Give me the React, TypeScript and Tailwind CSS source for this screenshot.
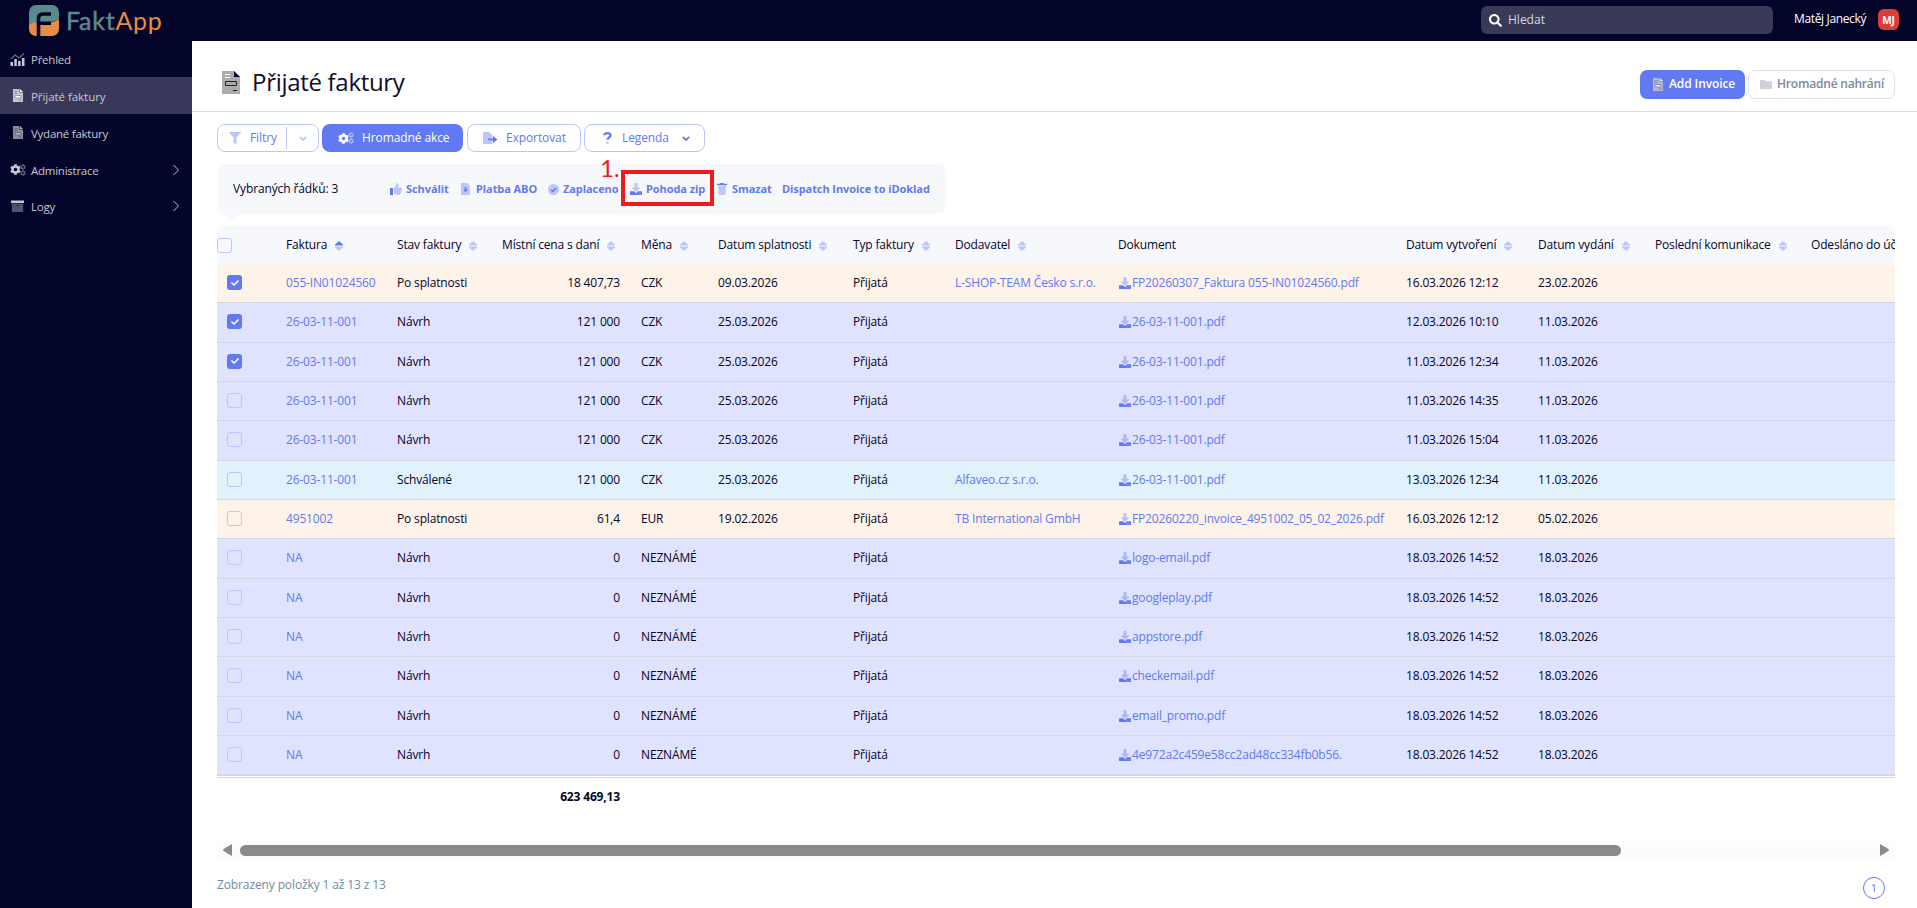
import type { ReactNode } from 'react';
import { FaCheck, FaCog, FaSearch } from 'react-icons/fa';

type Row = {
  invoice: string;
  status: string;
  price: string;
  currency: string;
  due: string;
  supplier: string;
  file: string;
  created: string;
  issued: string;
  checked?: boolean;
};

const draft = (created: string, checked = false): Row => ({
  invoice: '26-03-11-001',
  status: 'Návrh',
  price: '121 000',
  currency: 'CZK',
  due: '25.03.2026',
  supplier: '',
  file: '26-03-11-001.pdf',
  created,
  issued: '11.03.2026',
  checked,
});

const unknown = (file: string): Row => ({
  invoice: 'NA',
  status: 'Návrh',
  price: '0',
  currency: 'NEZNÁMÉ',
  due: '',
  supplier: '',
  file,
  created: '18.03.2026 14:52',
  issued: '18.03.2026',
});

const rows: Row[] = [
  {
    invoice: '055-IN01024560',
    status: 'Po splatnosti',
    price: '18 407,73',
    currency: 'CZK',
    due: '09.03.2026',
    supplier: 'L-SHOP-TEAM Česko s.r.o.',
    file: 'FP20260307_Faktura 055-IN01024560.pdf',
    created: '16.03.2026 12:12',
    issued: '23.02.2026',
    checked: true,
  },
  draft('12.03.2026 10:10', true),
  draft('11.03.2026 12:34', true),
  draft('11.03.2026 14:35'),
  draft('11.03.2026 15:04'),
  { ...draft('13.03.2026 12:34'), status: 'Schválené', supplier: 'Alfaveo.cz s.r.o.' },
  {
    invoice: '4951002',
    status: 'Po splatnosti',
    price: '61,4',
    currency: 'EUR',
    due: '19.02.2026',
    supplier: 'TB International GmbH',
    file: 'FP20260220_invoice_4951002_05_02_2026.pdf',
    created: '16.03.2026 12:12',
    issued: '05.02.2026',
  },
  unknown('logo-email.pdf'),
  unknown('googleplay.pdf'),
  unknown('appstore.pdf'),
  unknown('checkemail.pdf'),
  unknown('email_promo.pdf'),
  unknown('4e972a2c459e58cc2ad48cc334fb0b56.'),
];

const rowColors: Record<string, string> = {
  'Po splatnosti': 'bg-[#fef3e8]',
  Návrh: 'bg-[#e0e3fe]',
  Schválené: 'bg-[#e1f2fd]',
};

const columns =
  'grid grid-cols-[69px_111px_105px_139px_77px_135px_102px_163px_288px_132px_117px_156px_180px] items-center';

export default function App() {
  return (
    <div className="flex h-[908px] w-[1917px] flex-col overflow-hidden bg-white font-['Open_Sans',sans-serif] text-[12px] text-[#04042b]">
      <TopBar />
      <div className="flex min-h-0 flex-1">
        <Sidebar />
        <main className="min-w-0 flex-1">
          <PageHeader />
          <div className="pr-[22px] pl-[25px]">
            <Toolbar />
            <BulkActions />
            <InvoiceTable />
            <Scrollbar />
            <div className="flex justify-between pr-[10px]">
              <span className="mt-[17px] text-[12px] leading-[18px] tracking-[-0.12px] text-[#7189a0]">
                Zobrazeny položky 1 až 13 z 13
              </span>
              <span className="mt-[18px] flex size-[22px] items-center justify-center rounded-full border border-[#6179f2] text-[11px] text-[#6179f2]">
                1
              </span>
            </div>
          </div>
        </main>
      </div>
    </div>
  );
}

function TopBar() {
  return (
    <header className="flex h-[41px] shrink-0 items-start bg-[#03042a]">
      <div className="flex h-full w-[192px] items-center pl-[29px]">
        <svg width="30" height="31" viewBox="0 0 30 31">
          <path d="M7 0h16a7 7 0 0 1 7 7v7c-6 4-13 3-20 4-5 0-8 1-10 3V7a7 7 0 0 1 7-7z" fill="#5a8a89" />
          <path d="M0 20c4-4 9-2 15-2 6 0 11-1 15-4v10a7 7 0 0 1-7 7H7a7 7 0 0 1-7-7z" fill="#e88b45" />
          <path d="M9.500 31V13.500q0-4.500 4.500-4.500h8M9.500 18.300h12.500" fill="none" stroke="#04042a" strokeWidth="3.600" />
        </svg>
        <span className="ml-[7px] -mt-px font-['Lato',sans-serif] text-[25px] leading-[30px] tracking-[0.75px] text-[#5a8a89]">
          <span className="[-webkit-text-stroke:0.5px_#5a8a89]">Fakt</span>
          <span className="text-[#e88b45]">App</span>
        </span>
      </div>
      <div className="mt-[6px] ml-auto flex h-[28px] w-[292px] items-center rounded-[6px] bg-[#383a58] pl-[8px] text-[12px] text-[#d6d7e0]">
        <FaSearch size={13} color="#ffffff" />
        <span className="ml-[6px]">Hledat</span>
      </div>
      <span className="mt-[10px] ml-[21px] w-[73px] whitespace-nowrap text-[12px] leading-[18px] tracking-[-0.35px] text-white">
        Matěj Janecký
      </span>
      <span className="mt-[9px] mr-[18px] ml-[11px] flex size-[21px] items-center justify-center rounded-[6px] bg-[#e03b3b] pt-[2px] text-[10px] font-bold text-white">
        MJ
      </span>
    </header>
  );
}

function Sidebar() {
  return (
    <nav className="w-[192px] shrink-0 bg-[#03042a] text-[11.5px] tracking-[-0.25px] text-[#c6c7cf]">
      <NavItem icon={<ChartIcon />} label="Přehled" className="h-[36px]" />
      <NavItem
        icon={<FileInvoice className="h-[13px] w-[10px]" />}
        label="Přijaté faktury"
        className="h-[37px] bg-[#38395a] tracking-[-0.05px]"
      />
      <NavItem icon={<FileInvoice className="h-[13px] w-[10px] opacity-70" />} label="Vydané faktury" className="h-[37px]" />
      <NavItem icon={<Cogs />} label="Administrace" className="h-[37px]" chevron />
      <NavItem icon={<ArchiveIcon />} label="Logy" className="h-[36px]" chevron />
    </nav>
  );
}

function NavItem({ icon, label, className, chevron }: { icon: ReactNode; label: string; className: string; chevron?: boolean }) {
  return (
    <div className={`flex items-center pl-[10px] ${className}`}>
      <span className="flex w-[15px] justify-center">{icon}</span>
      <span className="mt-[2px] ml-[6px]">{label}</span>
      {chevron && (
        <svg className="mr-[13px] ml-auto h-[12px] w-[6px]" viewBox="0 0 6 12" fill="none" stroke="currentColor">
          <path d="M.5 1l5 5-5 5" />
        </svg>
      )}
    </div>
  );
}

function PageHeader() {
  return (
    <div className="flex h-[71px] items-start border-b border-[#d9dade] pr-[22px] pl-[30px]">
      <svg className="mt-[30px]" width="18" height="23" viewBox="0 0 18 23">
        <path d="M0 0h12l6 6v17H0z" fill="#aaadab" />
        <path d="M12 0l6 6h-6z" fill="#03042a" />
        <path d="M3 3.500h5M3 6.500h5" stroke="#fff" />
        <path d="M3.500 10.500h11v4h-11zM11 19.500h4" fill="none" stroke="#1c2038" />
      </svg>
      <h1 className="mt-[26px] ml-[12px] text-[24px] leading-[30px] tracking-[-0.3px] text-[#0d0d2c]">Přijaté faktury</h1>
      <button className="mt-[29px] ml-auto flex h-[29px] w-[105px] items-center rounded-[7px] bg-[#6179f2] pb-px pl-[13px] font-semibold tracking-[-0.1px] text-white">
        <FileInvoice className="mr-[6px] h-[13px] w-[10px] opacity-80" />
        Add Invoice
      </button>
      <button className="mt-[29px] ml-[3px] flex h-[29px] w-[147px] items-center rounded-[7px] border border-[#dfe1ef] pb-px pl-[11px] font-semibold tracking-[-0.2px] whitespace-nowrap text-[#7b8a9e]">
        <svg className="mr-[5px] h-[9px] w-[12px]" viewBox="0 0 12 9" fill="#cdd0d8">
          <path d="M1 0h3.500l1.200 1.200H11a1 1 0 0 1 1 1V8a1 1 0 0 1-1 1H1a1 1 0 0 1-1-1V1a1 1 0 0 1 1-1z" />
        </svg>
        Hromadné nahrání
      </button>
    </div>
  );
}

function Toolbar() {
  return (
    <div className="flex pt-[12px] text-[12px] tracking-[-0.1px] text-[#6179f2]">
      <div className="flex h-[28px] w-[102px] items-center rounded-[8px] border border-[#bcc6fd] pl-[11px]">
        <svg className="h-[12px] w-[12px]" viewBox="0 0 512 512" fill="#bcc6fd">
          <path d="M488 0H24C2.700 0-8.100 25.900 7.100 41L192 226v206c0 8 4 15 10 20l80 56c16 11 38 0 38-20V226L505 41c15-15 4-41-17-41z" />
        </svg>
        <span className="ml-[9px]">Filtry</span>
        <span className="ml-auto h-[22px] w-px bg-[#bcc6fd]" />
        <Chevron className="mr-[11px] ml-[12px] text-[#bcc6fd]" />
      </div>
      <div className="ml-[3px] flex h-[28px] w-[141px] items-center rounded-[8px] bg-[#6179f2] pl-[16px] text-white">
        <Cogs />
        <span className="ml-[8px] whitespace-nowrap">Hromadné akce</span>
      </div>
      <div className="ml-[4px] flex h-[28px] w-[114px] items-center rounded-[8px] border border-[#bcc6fd] pl-[15px]">
        <svg className="h-[12px] w-[15px]" viewBox="0 0 15 12">
          <path d="M1 0h5l3.500 3.500V11a1 1 0 0 1-1 1H1a1 1 0 0 1-1-1V1a1 1 0 0 1 1-1z" fill="#bcc6fd" />
          <path d="M5 6.500h5V4l4.500 3.500L10 11V8.300H5z" fill="#6179f2" />
        </svg>
        <span className="ml-[8px]">Exportovat</span>
      </div>
      <div className="ml-[3px] flex h-[28px] w-[121px] items-center rounded-[8px] border border-[#bcc6fd] pl-[18px]">
        <svg className="h-[12px] w-[9px]" viewBox="0 0 9 12">
          <path d="M1.200 3.200C2 .5 7.500.5 7.500 3.500c0 2-3 2-3 4.300" fill="none" stroke="#6179f2" strokeWidth="2.200" />
          <circle cx="4.500" cy="10.700" r="1.300" fill="#bcc6fd" />
        </svg>
        <span className="ml-[10px]">Legenda</span>
        <Chevron className="mr-[14px] ml-auto" />
      </div>
    </div>
  );
}

function BulkActions() {
  return (
    <div className="relative mt-[12px] flex h-[50px] w-[729px] items-center rounded-[8px] bg-[#f7f8fc] pl-[16px] whitespace-nowrap">
      <span className="w-[157px] text-[12px] tracking-[-0.12px]">Vybraných řádků: 3</span>
      <div className="flex items-center text-[11px] font-bold tracking-[-0.08px] text-[#6179f2]">
        <Action
          width="w-[71px]"
          label="Schválit"
          icon={
            <svg className="h-[12px] w-[12px]" viewBox="0 0 12 12">
              <path d="M0 5h3v7H0z" fill="#6179f2" />
              <path d="M4 5l2-2.500V.8C6 0 8.500-.3 8.500 2c0 1-.5 2-.8 2.500H11c1.300 0 1.200 1.700.6 2 .5.500.3 1.500-.2 1.800.2.700 0 1.300-.5 1.500 0 1.500-.6 2-1.900 2-2 0-3-.3-5-1.300z" fill="#bcc6fd" />
            </svg>
          }
        />
        <Action
          width="w-[87px]"
          label="Platba ABO"
          icon={
            <svg className="h-[12px] w-[9px]" viewBox="0 0 9 12">
              <path d="M0 0h6l3 3v9H0z" fill="#bcc6fd" />
              <path d="M3.700 4h1.600v2.500H7L4.500 9.200 2 6.500h1.700z" fill="#6179f2" />
            </svg>
          }
          gap="ml-[6px]"
        />
        <Action
          width="w-[82px]"
          label="Zaplaceno"
          icon={
            <svg className="h-[11px] w-[11px]" viewBox="0 0 11 11">
              <circle cx="5.500" cy="5.500" r="5.500" fill="#bcc6fd" />
              <path d="M3 5.700l1.800 1.800 3.400-3.600" fill="none" stroke="#6179f2" strokeWidth="1.500" />
            </svg>
          }
        />
        <Action width="w-[87px]" label="Pohoda zip" icon={<Download />} />
        <Action
          width="w-[65px]"
          label="Smazat"
          icon={
            <svg className="h-[12px] w-[10px]" viewBox="0 0 10 12">
              <path d="M1 3h8l-.5 9h-7z" fill="#bcc6fd" />
              <path d="M0 .8h3L3.500 0h3l.5.800h3v1.500H0z" fill="#6179f2" />
            </svg>
          }
          gap="ml-[5px]"
        />
        <span>Dispatch Invoice to iDoklad</span>
      </div>
      <div className="absolute -bottom-[7px] left-[8px] border-x-[8px] border-t-[7px] border-x-transparent border-t-[#f7f8fc]" />
      <div className="absolute top-[6px] left-[404px] h-[36px] w-[93px] border-[4px] border-[#ec1b1e]" />
      <span className="absolute -top-[12px] left-[383px] font-['Lato',sans-serif] text-[24px] leading-[32px] text-[#ec1b1e]">1.</span>
    </div>
  );
}

function Action({ icon, label, width, gap = 'ml-[4px]' }: { icon: ReactNode; label: string; width: string; gap?: string }) {
  return (
    <span className={`flex items-center ${width}`}>
      {icon}
      <span className={gap}>{label}</span>
    </span>
  );
}

function InvoiceTable() {
  return (
    <div className="mt-[12px] overflow-hidden rounded-t-[8px] tracking-[-0.16px] whitespace-nowrap">
      <div className={`${columns} h-[38px] bg-[#f7f8fc]`}>
        <Checkbox />
        <HeadCell label="Faktura" sorted />
        <HeadCell label="Stav faktury" />
        <HeadCell label="Místní cena s daní" />
        <HeadCell label="Měna" />
        <HeadCell label="Datum splatnosti" />
        <HeadCell label="Typ faktury" />
        <HeadCell label="Dodavatel" />
        <span>Dokument</span>
        <HeadCell label="Datum vytvoření" />
        <HeadCell label="Datum vydání" />
        <HeadCell label="Poslední komunikace" />
        <HeadCell label="Odesláno do účetnictví" />
      </div>
      {rows.map((row, i) => (
        <div key={i} className={`${columns} h-[39.33px] border-b border-[#d5d6e4] ${rowColors[row.status]}`}>
          <span className="-mt-px pl-[10px]">
            <Checkbox checked={row.checked} />
          </span>
          <span className="text-[#6179f2]">{row.invoice}</span>
          <span>{row.status}</span>
          <span className="pr-[21px] text-right">{row.price}</span>
          <span>{row.currency}</span>
          <span>{row.due}</span>
          <span>Přijatá</span>
          <span className="text-[#6179f2]">{row.supplier}</span>
          <span className="flex items-center gap-px pl-px text-[#6179f2]">
            <Download />
            {row.file}
          </span>
          <span>{row.created}</span>
          <span>{row.issued}</span>
        </div>
      ))}
      <div className="h-px bg-[#d5d6e4]" />
      <div className="mt-px flex h-[38px] items-center border-t border-[#d5d6e4] font-bold">
        <span className="w-[403px] text-right">623 469,13</span>
      </div>
    </div>
  );
}

function HeadCell({ label, sorted }: { label: string; sorted?: boolean }) {
  return (
    <span className="flex items-center gap-[8px]">
      {label}
      <svg className="mt-px h-[10px] w-[8px] shrink-0" viewBox="0 0 8 10" fill="#bcc6fd">
        <path d="M4 0l4 3.500v.9H0v-.9z" fill={sorted ? '#6179f2' : '#bcc6fd'} />
        <path d="M4 10l4-3.500v-.9H0v.9z" />
      </svg>
    </span>
  );
}

function Checkbox({ checked }: { checked?: boolean }) {
  return checked ? (
    <span className="flex size-[15px] items-center justify-center rounded-[3px] bg-[#6179f2] pl-px text-white">
      <FaCheck size={8} />
    </span>
  ) : (
    <span className="block size-[15px] rounded-[3px] border border-[#bcc6fd]" />
  );
}

function Scrollbar() {
  return (
    <div className="mt-[26px] flex h-[18px] items-center bg-[#fcfcfc] px-[6px] text-[#8a8a8a]">
      <svg className="h-[12px] w-[9px]" viewBox="0 0 9 12" fill="currentColor">
        <path d="M9 0v12L.6 7Q-.4 6 .6 5z" />
      </svg>
      <div className="ml-[8px] h-[11px] w-[1381px] rounded-full bg-[#8a8a8a]" />
      <svg className="ml-auto h-[12px] w-[9px]" viewBox="0 0 9 12" fill="currentColor">
        <path d="M0 0v12l8.400-5Q9.400 6 8.400 5z" />
      </svg>
    </div>
  );
}

function Download() {
  return (
    <svg className="h-[12px] w-[12px] shrink-0" viewBox="0 0 512 512" fill="#6179f2">
      <path
        opacity=".4"
        d="M216 0h80c13.300 0 24 10.700 24 24v168h87.700c17.800 0 26.700 21.500 14.100 34.100L269.700 378.300c-7.500 7.500-19.800 7.500-27.300 0L90.100 226.100c-12.600-12.600-3.700-34.100 14.100-34.100H192V24c0-13.300 10.700-24 24-24z"
      />
      <path d="M512 376v112c0 13.300-10.700 24-24 24H24c-13.300 0-24-10.700-24-24V376c0-13.300 10.700-24 24-24h146.700l49 49c20.100 20.100 52.500 20.100 72.600 0l49-49H488c13.300 0 24 10.700 24 24zm-124 88c0-11-9-20-20-20s-20 9-20 20 9 20 20 20 20-9 20-20zm64 0c0-11-9-20-20-20s-20 9-20 20 9 20 20 20 20-9 20-20z" />
    </svg>
  );
}

function FileInvoice({ className }: { className: string }) {
  return (
    <svg className={className} viewBox="0 0 10 13">
      <path d="M0 0h6.500v3.500H10V13H0z" fill="#c4c6cc" />
      <path d="M7 0l3 3H7z" fill="#fff" />
      <path d="M1.500 2.500h3M1.500 4.500h3M5.500 11h3" stroke="#7a7c94" strokeWidth=".8" />
      <path d="M2 6.500h6v2.500H2z" fill="#fff" stroke="#7a7c94" strokeWidth=".7" />
    </svg>
  );
}

function Cogs() {
  return (
    <span className="flex h-[12px] w-[16px] shrink-0 items-center">
      <FaCog size={11} className="shrink-0" />
      <span className="-ml-px flex flex-col opacity-45">
        <FaCog size={6} />
        <FaCog size={6} />
      </span>
    </span>
  );
}

function ChartIcon() {
  return (
    <svg width="15" height="13" viewBox="0 0 15 13">
      <path d="M.5 9h2.500v4H.5zM4.300 6h2.500v7H4.300zM8.100 8h2.500v5H8.100zM11.900 5h2.600v8h-2.600z" fill="#c6c7cf" />
      <path d="M1 6l4-4 4 3 5-4.500" fill="none" stroke="#6b6c85" strokeWidth="1.200" />
    </svg>
  );
}

function ArchiveIcon() {
  return (
    <svg width="13" height="12" viewBox="0 0 13 12">
      <path d="M.8 3.500h11.400V11a1 1 0 0 1-1 1H1.800a1 1 0 0 1-1-1z" fill="#4d566f" />
      <path d="M0 .5h13v2.500H0z" fill="#c6c7cf" />
      <path d="M4.500 5.500h4" stroke="#2a2f4c" />
    </svg>
  );
}

function Chevron({ className }: { className: string }) {
  return (
    <svg className={`h-[5px] w-[8px] ${className}`} viewBox="0 0 8 5" fill="none" stroke="currentColor" strokeWidth="1.800">
      <path d="M.8.8L4 4 7.200.8" />
    </svg>
  );
}
